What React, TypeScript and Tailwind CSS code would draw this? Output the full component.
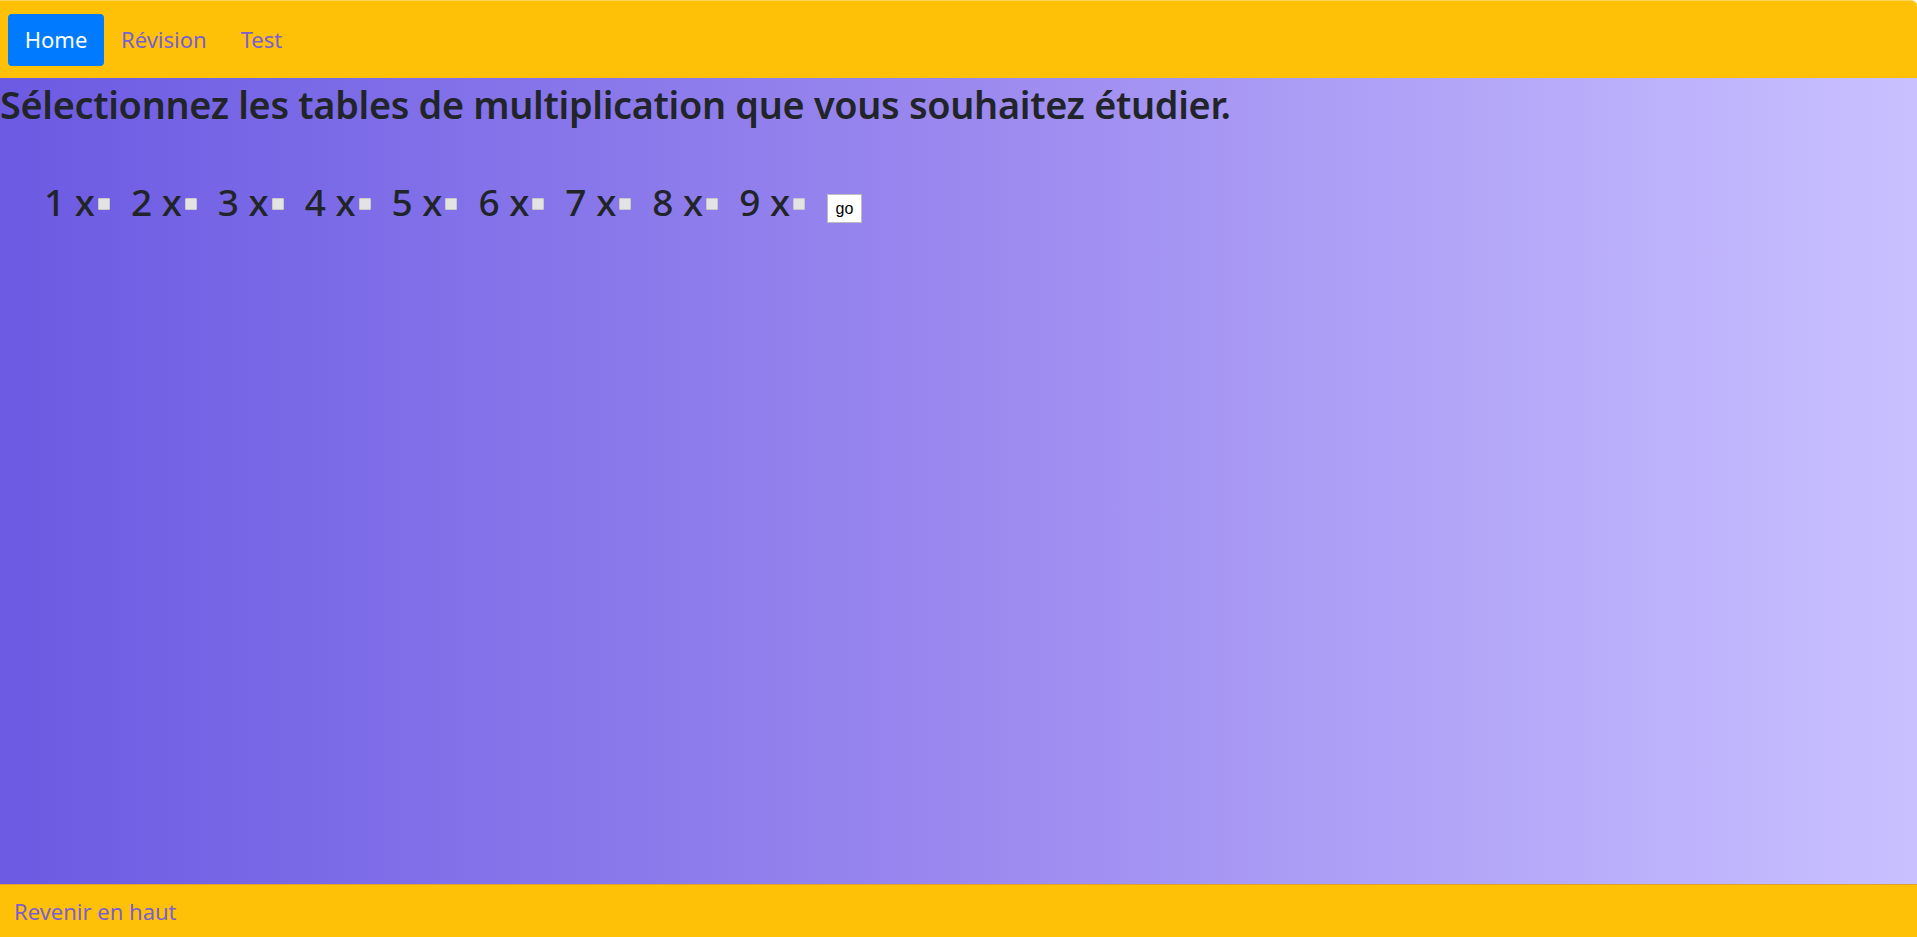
import { useState } from "react";

const tables = [1, 2, 3, 4, 5, 6, 7, 8, 9];

export default function App() {
  const [checked, setChecked] = useState<number[]>([]);

  const toggle = (n: number) => {
    setChecked((prev) =>
      prev.includes(n) ? prev.filter((x) => x !== n) : [...prev, n]
    );
  };

  return (
    <div className="flex flex-col h-screen font-['Noto_Sans',sans-serif]">
      <nav className="h-[78px] shrink-0 flex items-center px-2 bg-[#ffc107] border-t border-[#ffd55a] rounded-tr-md">
        <a className="h-[52px] w-[96px] flex items-center justify-center rounded bg-[#007bff] text-white text-[22px]">
          Home
        </a>
        <a className="pl-[17px] text-[22px] text-[#7a5fd3]">Révision</a>
        <a className="pl-[34px] text-[22px] text-[#7a5fd3]">Test</a>
      </nav>

      <main className="flex-1 bg-gradient-to-r from-[#6c5ae2] via-[#9b88ef] to-[#c9c0ff] text-[#212529]">
        <h1 className="text-[37.8px] font-semibold leading-[54px] tracking-[-0.3px]">
          Sélectionnez les tables de multiplication que vous souhaitez étudier.
        </h1>
        <div className="flex items-center pl-[44px] mt-[48px]">
          {tables.map((n) => (
            <label key={n} className="flex items-center mr-[21px]">
              <span className="text-[37px] font-medium leading-none">{n} x</span>
              <input
                type="checkbox"
                checked={checked.includes(n)}
                onChange={() => toggle(n)}
                className="appearance-none ml-[3px] mt-[4px] w-[12px] h-[12px] bg-[#e3e3e3] border border-[#c8c8c8] rounded-[1px]"
              />
            </label>
          ))}
          <button className="ml-[1px] mt-[14px] w-[35px] h-[29px] bg-white border border-[#bdbdbd] text-[16px] text-black font-['Liberation_Sans',sans-serif]">
            go
          </button>
        </div>
      </main>

      <footer className="h-[53px] shrink-0 flex items-center px-[14px] bg-[#ffc107] border-t border-[#e0a030]">
        <a className="text-[22px] text-[#7a5fd3]">Revenir en haut</a>
      </footer>
    </div>
  );
}
